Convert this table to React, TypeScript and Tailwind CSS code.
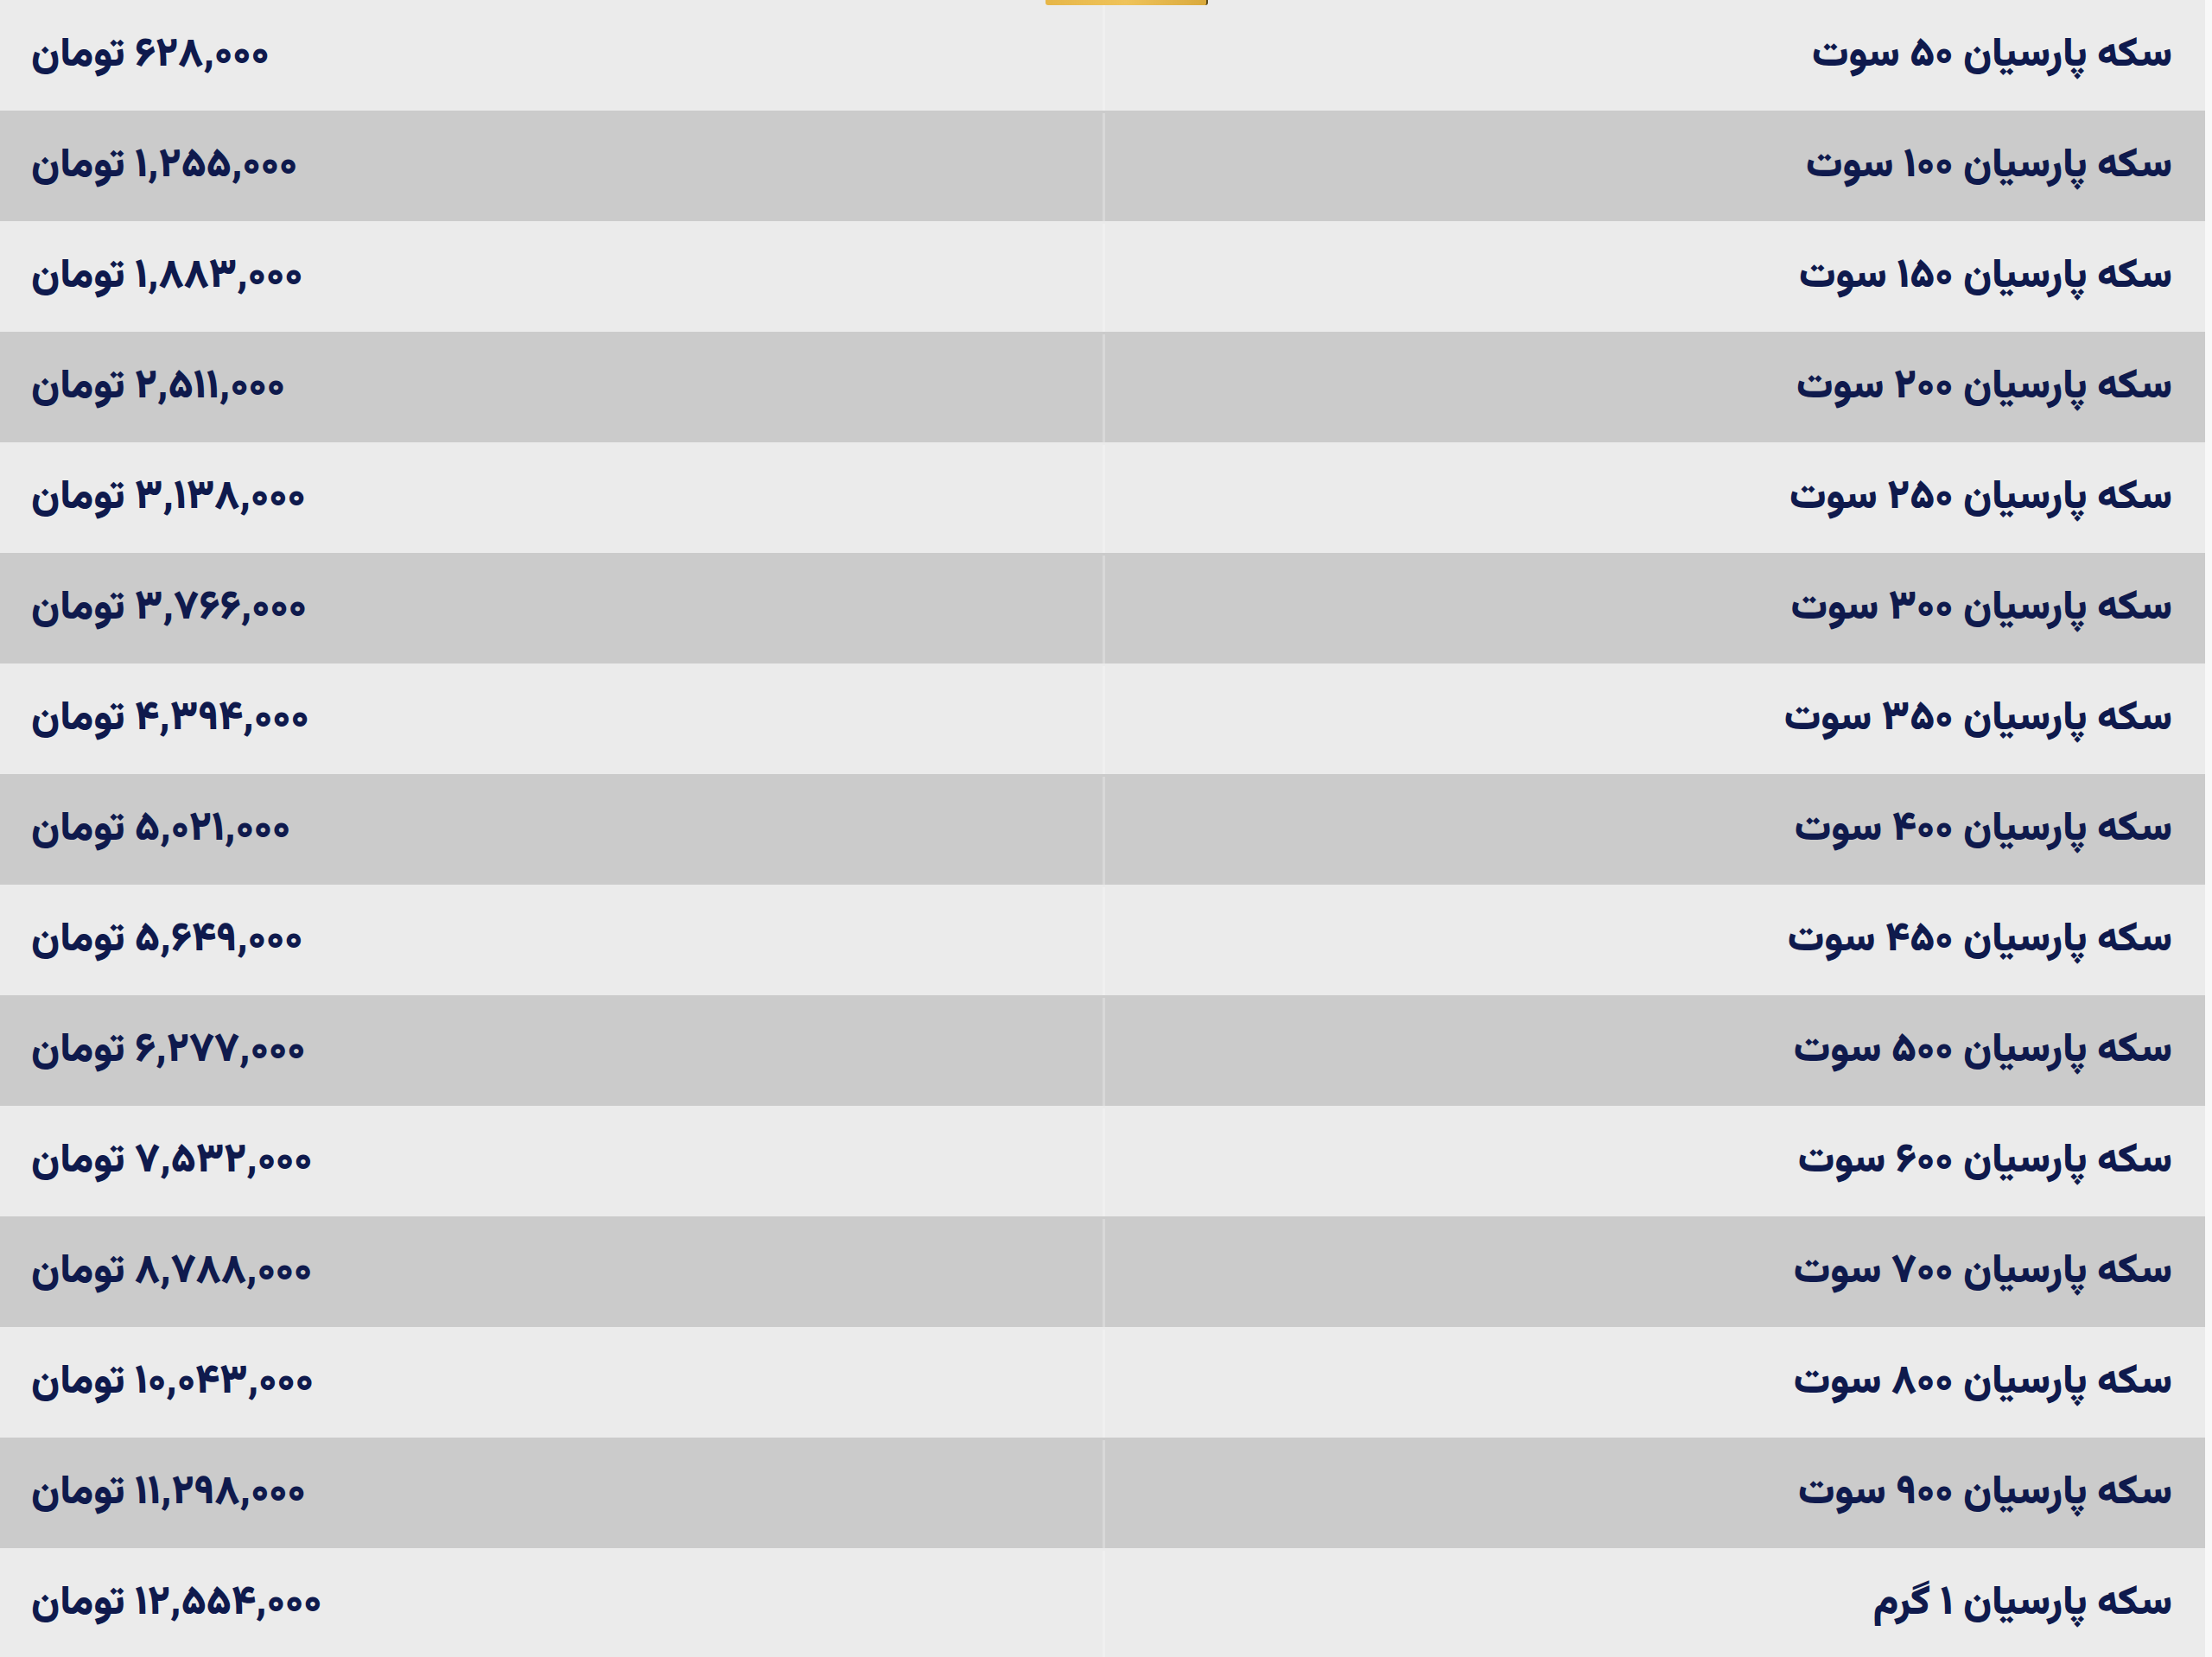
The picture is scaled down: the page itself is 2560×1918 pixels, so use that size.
const rows = [
  ["سکه پارسیان ۵۰ سوت", "۶۲۸,۰۰۰ تومان"],
  ["سکه پارسیان ۱۰۰ سوت", "۱,۲۵۵,۰۰۰ تومان"],
  ["سکه پارسیان ۱۵۰ سوت", "۱,۸۸۳,۰۰۰ تومان"],
  ["سکه پارسیان ۲۰۰ سوت", "۲,۵۱۱,۰۰۰ تومان"],
  ["سکه پارسیان ۲۵۰ سوت", "۳,۱۳۸,۰۰۰ تومان"],
  ["سکه پارسیان ۳۰۰ سوت", "۳,۷۶۶,۰۰۰ تومان"],
  ["سکه پارسیان ۳۵۰ سوت", "۴,۳۹۴,۰۰۰ تومان"],
  ["سکه پارسیان ۴۰۰ سوت", "۵,۰۲۱,۰۰۰ تومان"],
  ["سکه پارسیان ۴۵۰ سوت", "۵,۶۴۹,۰۰۰ تومان"],
  ["سکه پارسیان ۵۰۰ سوت", "۶,۲۷۷,۰۰۰ تومان"],
  ["سکه پارسیان ۶۰۰ سوت", "۷,۵۳۲,۰۰۰ تومان"],
  ["سکه پارسیان ۷۰۰ سوت", "۸,۷۸۸,۰۰۰ تومان"],
  ["سکه پارسیان ۸۰۰ سوت", "۱۰,۰۴۳,۰۰۰ تومان"],
  ["سکه پارسیان ۹۰۰ سوت", "۱۱,۲۹۸,۰۰۰ تومان"],
  ["سکه پارسیان ۱ گرم", "۱۲,۵۵۴,۰۰۰ تومان"],
];

export default function App() {
  return (
    <div className="relative w-[2560px] h-[1918px] overflow-hidden bg-[#f8f8f8] font-['Vazirmatn','Noto_Sans_Arabic',sans-serif]">
      {/* gold tab edge peeking from above */}
      <div className="absolute top-0 left-[1210px] w-[188px] h-[6px] rounded-b-[3px] bg-gradient-to-r from-[#e6b648] via-[#efc35a] to-[#d9a93c] border-r-2 border-[#5a4a1c]" />

      <div className="w-[2552px] flex flex-col">
        {rows.map(([name, price], i) => (
          <div
            key={i}
            dir="rtl"
            className={`grid grid-cols-2 h-[128px] pt-[3px] ${
              i % 2 === 0 ? "bg-[#ebebeb]" : "bg-[#cbcbcb]"
            }`}
          >
            <div className="flex items-center pr-[38px] text-[47px] font-black text-[#0f1a4d] border-l-[3px] border-white/25">
              {name}
            </div>
            <div className="flex items-center justify-end pl-[36px] text-[47px] font-black text-[#0f1a4d]">
              <span>{price}</span>
            </div>
          </div>
        ))}
      </div>
    </div>
  );
}
